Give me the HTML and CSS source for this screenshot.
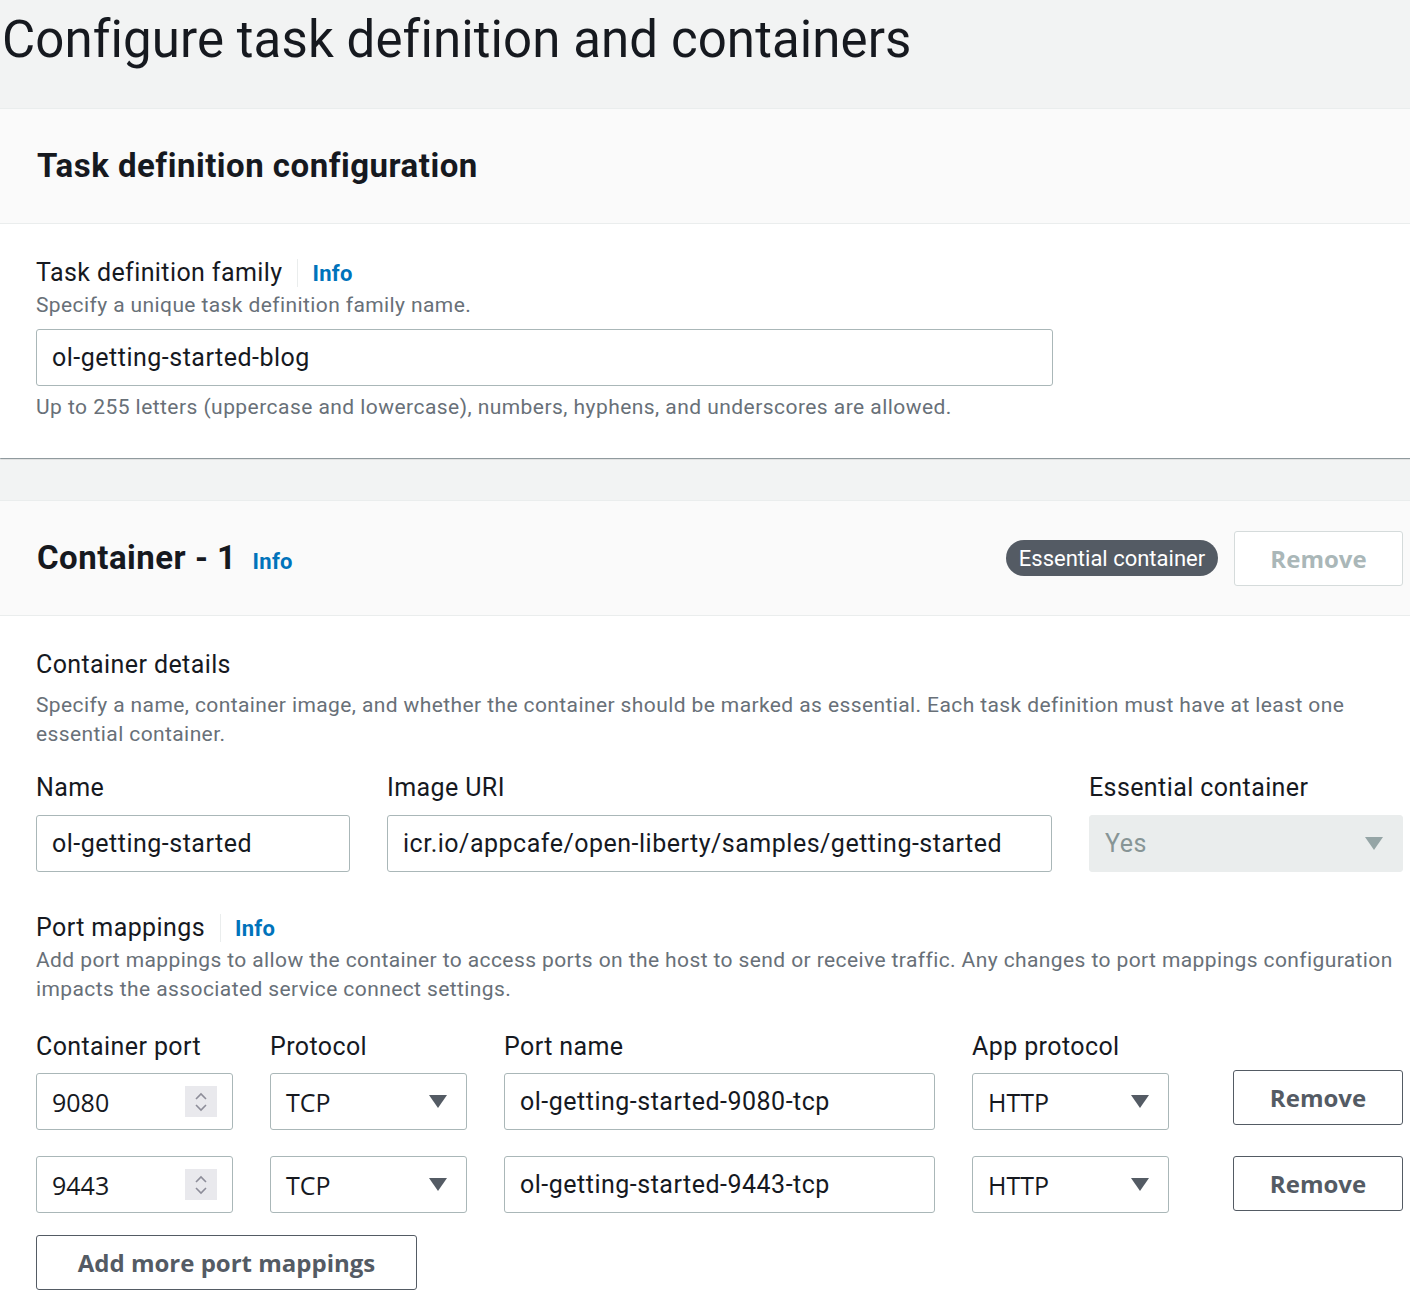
FILE: index.html
```html
<!DOCTYPE html>
<html>
<head>
<meta charset="utf-8">
<link rel="stylesheet" href="styles.css">
</head>
<body>
<header class="page-header">
  <h1 class="page-title">Configure task definition and containers</h1>
</header>

<section class="panel panel-first">
  <div class="panel-head">
    <h2 class="panel-title">Task definition configuration</h2>
  </div>
  <div class="panel-body body-first">
    <div class="label-row">
      <span class="label">Task definition family</span>
      <span class="divider"></span>
      <a class="info">Info</a>
    </div>
    <div class="desc">Specify a unique task definition family name.</div>
    <div class="input family-input">ol-getting-started-blog</div>
    <div class="hint">Up to 255 letters (uppercase and lowercase), numbers, hyphens, and underscores are allowed.</div>
  </div>
</section>

<section class="panel panel-second">
  <div class="panel-head head-container">
    <div class="head-left">
      <h2 class="panel-title">Container - 1</h2>
      <a class="info info-head">Info</a>
    </div>
    <div class="head-right">
      <span class="badge">Essential container</span>
      <button class="btn btn-disabled">Remove</button>
    </div>
  </div>
  <div class="panel-body body-second">
    <div class="label sub-title">Container details</div>
    <div class="desc desc-block">Specify a name, container image, and whether the container should be marked as essential. Each task definition must have at least one essential container.</div>

    <div class="details-grid">
      <div class="field">
        <div class="label">Name</div>
        <div class="input">ol-getting-started</div>
      </div>
      <div class="field">
        <div class="label">Image URI</div>
        <div class="input">icr.io/appcafe/open-liberty/samples/getting-started</div>
      </div>
      <div class="field">
        <div class="label">Essential container</div>
        <div class="input select select-disabled">
          <span>Yes</span>
          <svg class="caret" width="18" height="13" viewBox="0 0 18 13"><path d="M0 0H18L9 13Z"/></svg>
        </div>
      </div>
    </div>

    <div class="label-row port-label-row">
      <span class="label">Port mappings</span>
      <span class="divider"></span>
      <a class="info">Info</a>
    </div>
    <div class="desc">Add port mappings to allow the container to access ports on the host to send or receive traffic. Any changes to port mappings configuration impacts the associated service connect settings.</div>

    <div class="port-grid port-labels">
      <div class="label">Container port</div>
      <div class="label">Protocol</div>
      <div class="label">Port name</div>
      <div class="label">App protocol</div>
    </div>

    <div class="port-grid port-row">
      <div class="input number">
        <span class="val-sys">9080</span>
        <span class="spinner">
          <svg width="14" height="22" viewBox="0 0 14 22"><path d="M2 8L7 3L12 8M2 14L7 19L12 14" fill="none" stroke="#8d8d99" stroke-width="1.6"/></svg>
        </span>
      </div>
      <div class="input select">
        <span class="val-sys">TCP</span>
        <svg class="caret" width="18" height="13" viewBox="0 0 18 13"><path d="M0 0H18L9 13Z"/></svg>
      </div>
      <div class="input">ol-getting-started-9080-tcp</div>
      <div class="input select">
        <span class="val-sys">HTTP</span>
        <svg class="caret" width="18" height="13" viewBox="0 0 18 13"><path d="M0 0H18L9 13Z"/></svg>
      </div>
      <button class="btn btn-normal remove-first">Remove</button>
    </div>

    <div class="port-grid port-row row-second">
      <div class="input number">
        <span class="val-sys">9443</span>
        <span class="spinner">
          <svg width="14" height="22" viewBox="0 0 14 22"><path d="M2 8L7 3L12 8M2 14L7 19L12 14" fill="none" stroke="#8d8d99" stroke-width="1.6"/></svg>
        </span>
      </div>
      <div class="input select">
        <span class="val-sys">TCP</span>
        <svg class="caret" width="18" height="13" viewBox="0 0 18 13"><path d="M0 0H18L9 13Z"/></svg>
      </div>
      <div class="input">ol-getting-started-9443-tcp</div>
      <div class="input select">
        <span class="val-sys">HTTP</span>
        <svg class="caret" width="18" height="13" viewBox="0 0 18 13"><path d="M0 0H18L9 13Z"/></svg>
      </div>
      <button class="btn btn-normal">Remove</button>
    </div>

    <button class="btn btn-normal btn-add">Add more port mappings</button>
  </div>
</section>
</body>
</html>
```

FILE: styles.css
```css
* { box-sizing: border-box; }

body {
  margin: 0;
  background: #f2f3f3;
  font-family: Roboto, "Liberation Sans", sans-serif;
  color: #16191f;
}

.page-header {
  height: 108px;
  padding-left: 2px;
}

.page-title {
  margin: 0;
  font-size: 51px;
  font-weight: 400;
  line-height: 80px;
  letter-spacing: 0.1px;
}

.panel {
  background: #ffffff;
}

.panel-first {
  box-shadow: 0 1px 1px 0 rgba(0, 28, 36, 0.3), 1px 1px 1px 0 rgba(0, 28, 36, 0.15);
  border-top: 1px solid #eaeded;
  margin-bottom: 42px;
}

.panel-second {
  border-top: 1px solid #eaeded;
}

.panel-head {
  height: 115px;
  background: #fafafa;
  border-bottom: 1px solid #eaeded;
  display: flex;
  align-items: center;
  padding: 0 7px 0 37px;
}

.panel-title {
  margin: 0;
  font-size: 33px;
  font-weight: 700;
  line-height: 40px;
  letter-spacing: 0.5px;
}

.head-container {
  justify-content: space-between;
}

.head-left {
  display: flex;
  align-items: baseline;
  gap: 16px;
}

.head-right {
  display: flex;
  align-items: center;
  gap: 16px;
}

.badge {
  display: inline-flex;
  align-items: center;
  justify-content: center;
  width: 212px;
  height: 36px;
  border-radius: 18px;
  background: #545b64;
  color: #ffffff;
  font-size: 22px;
}

.btn {
  font-family: "Open Sans", "Noto Sans", sans-serif;
  font-weight: 700;
  font-size: 24px;
  background: #ffffff;
  border-radius: 3px;
  height: 55px;
  padding: 0;
  cursor: pointer;
}

.btn-disabled {
  width: 169px;
  border: 1.5px solid #d5dbdb;
  color: #aab7b8;
}

.btn-normal {
  width: 170px;
  border: 1.5px solid #545b64;
  color: #545b64;
}

.panel-body {
  padding: 0 7px 0 36px;
}

.body-first {
  padding-top: 31px;
  padding-bottom: 36px;
}

.body-second {
  padding-top: 31px;
  padding-bottom: 9px;
}

.label-row {
  display: flex;
  align-items: center;
}

.label {
  font-size: 25px;
  line-height: 36px;
  letter-spacing: 0.4px;
  color: #16191f;
}

.divider {
  width: 1px;
  height: 28px;
  background: #eaeded;
  margin: 0 14px 0 15px;
}

.info {
  color: #0073bb;
  font-weight: 700;
  font-size: 22px;
  letter-spacing: 0.3px;
}

.desc {
  font-size: 21px;
  line-height: 29px;
  letter-spacing: 0.4px;
  color: #687078;
}

.hint {
  font-size: 21px;
  line-height: 29px;
  letter-spacing: 0.45px;
  color: #687078;
  margin-top: 7px;
}

.input {
  height: 57px;
  border: 1px solid #aab7b8;
  border-radius: 3px;
  background: #ffffff;
  display: flex;
  align-items: center;
  padding: 0 15px;
  font-size: 25px;
  letter-spacing: 0.5px;
  color: #16191f;
  white-space: nowrap;
}

.family-input {
  width: 1017px;
  margin-top: 9px;
}

.desc-block {
  margin-top: 8px;
}

.details-grid {
  display: grid;
  grid-template-columns: 314px 1fr 314px;
  column-gap: 37px;
  margin-top: 21px;
}

.field .label {
  margin-bottom: 9px;
}

.select {
  justify-content: space-between;
}

.caret {
  fill: #545b64;
  margin-right: 4px;
}

.select-disabled {
  background: #eaeded;
  border-color: #eaeded;
  color: #879596;
}

.select-disabled .caret {
  fill: #95a5a6;
}

.port-label-row {
  margin-top: 38px;
}

.port-grid {
  display: grid;
  grid-template-columns: 197px 197px 431px 197px 1fr;
  column-gap: 37px;
}

.port-labels {
  margin-top: 25px;
}

.port-row {
  margin-top: 8px;
  align-items: start;
}

.row-second {
  margin-top: 26px;
}

.port-row .btn {
  justify-self: end;
}

.remove-first {
  margin-top: -3px;
}

.val-sys {
  font-family: "Open Sans", "Noto Sans", sans-serif;
  font-size: 25px;
  letter-spacing: 0;
}

.number {
  justify-content: space-between;
}

.spinner {
  width: 32px;
  height: 31px;
  background: #e9e9ed;
  display: flex;
  align-items: center;
  justify-content: center;
}

.btn-add {
  width: 381px;
  margin-top: 22px;
}
```
